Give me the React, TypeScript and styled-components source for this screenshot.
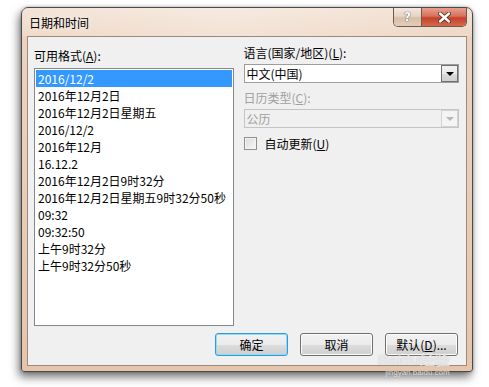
import React, { FC } from 'react'
import styled, { createGlobalStyle } from 'styled-components'

const GlobalStyle = createGlobalStyle`
  html, body {
    margin: 0;
    padding: 0;
    background: #fff;
  }
  body {
    font-family: 'Noto Sans CJK SC', 'Noto Sans', sans-serif;
    font-size: 12px;
    color: #000;
  }
`

const Page = styled.div`
  width: 489px;
  height: 387px;
  padding: 7px 0 0 21px;
  box-sizing: border-box;
  position: relative;
  overflow: hidden;
`

const Window = styled.div`
  width: 452px;
  height: 365px;
  box-sizing: border-box;
  border: 1px solid #4a4a4a;
  border-radius: 7px 7px 3px 3px;
  background: linear-gradient(180deg, #f1dfd0 0%, #ecd3bf 8%, #e6c5aa 100%);
  box-shadow: -2px 5px 10px rgba(0, 0, 0, 0.55), 0 0 3px rgba(0, 0, 0, 0.3);
  display: flex;
  flex-direction: column;
`

const TitleBar = styled.div`
  height: 28px;
  display: flex;
  align-items: flex-start;
  justify-content: space-between;
  padding: 0 5px 0 7px;
  background: linear-gradient(90deg, rgba(255, 255, 255, 0.15), rgba(255, 255, 255, 0.35) 45%, rgba(255, 255, 255, 0.1));
`

const Title = styled.div`
  font-size: 12px;
  line-height: 14px;
  padding-top: 8px;
  color: #000;
  text-shadow: 0 0 8px rgba(255, 255, 255, 0.9);
`

const CaptionButtons = styled.div`
  display: flex;
  border: 1px solid #6b5a4f;
  border-top: none;
  border-radius: 0 0 5px 5px;
  overflow: hidden;
  height: 18px;
`

const CaptionButton = styled.div<{ $close?: boolean }>`
  width: ${({ $close }) => ($close ? '45px' : '27px')};
  height: 18px;
  display: flex;
  align-items: center;
  justify-content: center;
  box-sizing: border-box;
  border-left: ${({ $close }) => ($close ? '1px solid #6b5a4f' : 'none')};
  background: ${({ $close }) =>
    $close
      ? 'linear-gradient(180deg, #e6a08e 0%, #d7725c 45%, #c4412a 55%, #d56a4d 100%)'
      : 'linear-gradient(180deg, #f4e8de 0%, #e7d4c4 45%, #d8bea8 55%, #e3cdb9 100%)'};
  color: #fff;
  font-family: 'DejaVu Sans', sans-serif;
  font-weight: bold;
  text-shadow: 0 0 1px #555, 0 0 1px #555;
`

const Client = styled.div`
  flex: 1;
  margin: 0 5px 5px 5px;
  border: 1px solid #9a8a80;
  background: #f0f0f0;
  display: flex;
  flex-direction: column;
  padding: 8px 7px 0 6px;
`

const Columns = styled.div`
  display: flex;
  gap: 10px;
`

const LeftColumn = styled.div`
  width: 200px;
  display: flex;
  flex-direction: column;
`

const RightColumn = styled.div`
  width: 216px;
  display: flex;
  flex-direction: column;
`

const Label = styled.div<{ $disabled?: boolean }>`
  line-height: 16px;
  height: 16px;
  color: ${({ $disabled }) => ($disabled ? '#a0a0a0' : '#000')};
`

const ListLabel = styled(Label)`
  padding-top: 3px;
  height: 21px;
  box-sizing: border-box;
  margin-bottom: 2px;
`

const ListBox = styled.div`
  height: 258px;
  box-sizing: border-box;
  border: 1px solid #828790;
  background: #fff;
  padding: 1px;
`

const ListItem = styled.div<{ $selected?: boolean }>`
  height: 17px;
  line-height: 17px;
  padding-left: 2px;
  white-space: nowrap;
  background: ${({ $selected }) => ($selected ? '#3399ff' : 'transparent')};
  color: ${({ $selected }) => ($selected ? '#fff' : '#000')};
`

const Select = styled.div<{ $disabled?: boolean }>`
  height: 19px;
  box-sizing: border-box;
  margin-top: 3px;
  border: 1px solid ${({ $disabled }) => ($disabled ? '#c4c4c4' : '#9d9d9d')};
  background: ${({ $disabled }) => ($disabled ? '#f0f0f0' : '#fff')};
  display: flex;
  align-items: center;
  justify-content: space-between;
  padding-left: 2px;
  color: ${({ $disabled }) => ($disabled ? '#a0a0a0' : '#000')};
`

const DropButton = styled.div<{ $disabled?: boolean }>`
  width: 17px;
  height: 17px;
  box-sizing: border-box;
  border: 1px solid ${({ $disabled }) => ($disabled ? '#d2d2d2' : '#707070')};
  background: ${({ $disabled }) =>
    $disabled ? '#f4f4f4' : 'linear-gradient(180deg, #f2f2f2 0%, #ebebeb 50%, #dcdcdc 51%, #cfcfcf 100%)'};
  display: flex;
  align-items: center;
  justify-content: center;
`

const Arrow = styled.div<{ $disabled?: boolean }>`
  width: 0;
  height: 0;
  border-left: 4px solid transparent;
  border-right: 4px solid transparent;
  border-top: 4px solid ${({ $disabled }) => ($disabled ? '#b8b8b8' : '#000')};
  margin-top: 1px;
`

const SecondLabel = styled(Label)`
  margin-top: 6px;
  line-height: 17px;
  height: 17px;
`

const CheckRow = styled.label`
  margin-top: 8px;
  display: flex;
  align-items: center;
  gap: 8px;
  height: 14px;
`

const CheckBox = styled.span`
  width: 13px;
  height: 13px;
  box-sizing: border-box;
  border: 1px solid #8e8f8f;
  background: linear-gradient(135deg, #dcdcdc, #f6f6f6);
  box-shadow: inset 0 0 0 1px #f4f4f4;
`

const ButtonRow = styled.div`
  display: flex;
  justify-content: flex-end;
  gap: 12px;
  margin-top: 7px;
  padding-right: 1px;
`

const Button = styled.div<{ $default?: boolean }>`
  width: 73px;
  height: 23px;
  box-sizing: border-box;
  border: 1px solid ${({ $default }) => ($default ? '#3399dd' : '#707070')};
  border-radius: 3px;
  background: linear-gradient(180deg, #f2f2f2 0%, #ebebeb 50%, #dddddd 51%, #cfcfcf 100%);
  box-shadow: ${({ $default }) => ($default ? 'inset 0 0 0 1px #8fdcf9' : 'inset 0 0 0 1px #fcfcfc')};
  display: flex;
  align-items: center;
  justify-content: center;
  line-height: 14px;
`

const Underline = styled.span`
  text-decoration: underline;
`

const Watermark = styled.div`
  position: absolute;
  left: 378px;
  top: 352px;
  color: rgba(255, 255, 255, 0.7);
  text-shadow: 0 0 1px rgba(120, 120, 120, 0.5);
  font-family: 'Liberation Sans', sans-serif;
  pointer-events: none;
  display: flex;
  flex-direction: column;
  align-items: flex-end;
`

const WatermarkTop = styled.div`
  font-size: 15px;
  font-weight: bold;
  line-height: 15px;
`

const WatermarkBottom = styled.div`
  font-size: 8px;
  line-height: 9px;
  margin-top: 1px;
`

const formats = [
  '2016/12/2',
  '2016年12月2日',
  '2016年12月2日星期五',
  '2016/12/2',
  '2016年12月',
  '16.12.2',
  '2016年12月2日9时32分',
  '2016年12月2日星期五9时32分50秒',
  '09:32',
  '09:32:50',
  '上午9时32分',
  '上午9时32分50秒',
]

const App: FC = () => (
  <Page>
    <GlobalStyle />
    <Window>
      <TitleBar>
        <Title>日期和时间</Title>
        <CaptionButtons>
          <CaptionButton>?</CaptionButton>
          <CaptionButton $close>
            <svg width='13' height='11' viewBox='0 0 13 11'>
              <path d='M2 1.5 L11 9.5 M11 1.5 L2 9.5' stroke='#4a2a22' strokeWidth='4' strokeLinecap='round' />
              <path d='M2 1.5 L11 9.5 M11 1.5 L2 9.5' stroke='#fff' strokeWidth='2.4' strokeLinecap='round' />
            </svg>
          </CaptionButton>
        </CaptionButtons>
      </TitleBar>
      <Client>
        <Columns>
          <LeftColumn>
            <ListLabel>
              可用格式(<Underline>A</Underline>):
            </ListLabel>
            <ListBox>
              {formats.map((f, i) => (
                <ListItem key={i} $selected={i === 0}>
                  {f}
                </ListItem>
              ))}
            </ListBox>
          </LeftColumn>
          <RightColumn>
            <Label>
              语言(国家/地区)(<Underline>L</Underline>):
            </Label>
            <Select>
              中文(中国)
              <DropButton>
                <Arrow />
              </DropButton>
            </Select>
            <SecondLabel $disabled>
              日历类型(<Underline>C</Underline>):
            </SecondLabel>
            <Select $disabled>
              公历
              <DropButton $disabled>
                <Arrow $disabled />
              </DropButton>
            </Select>
            <CheckRow>
              <CheckBox />
              <span>
                自动更新(<Underline>U</Underline>)
              </span>
            </CheckRow>
          </RightColumn>
        </Columns>
        <ButtonRow>
          <Button $default>确定</Button>
          <Button>取消</Button>
          <Button>
            默认(<Underline>D</Underline>)...
          </Button>
        </ButtonRow>
      </Client>
    </Window>
    <Watermark>
      <WatermarkTop>Baidu经验</WatermarkTop>
      <WatermarkBottom>jingyan.baidu.com</WatermarkBottom>
    </Watermark>
  </Page>
)

export default App
